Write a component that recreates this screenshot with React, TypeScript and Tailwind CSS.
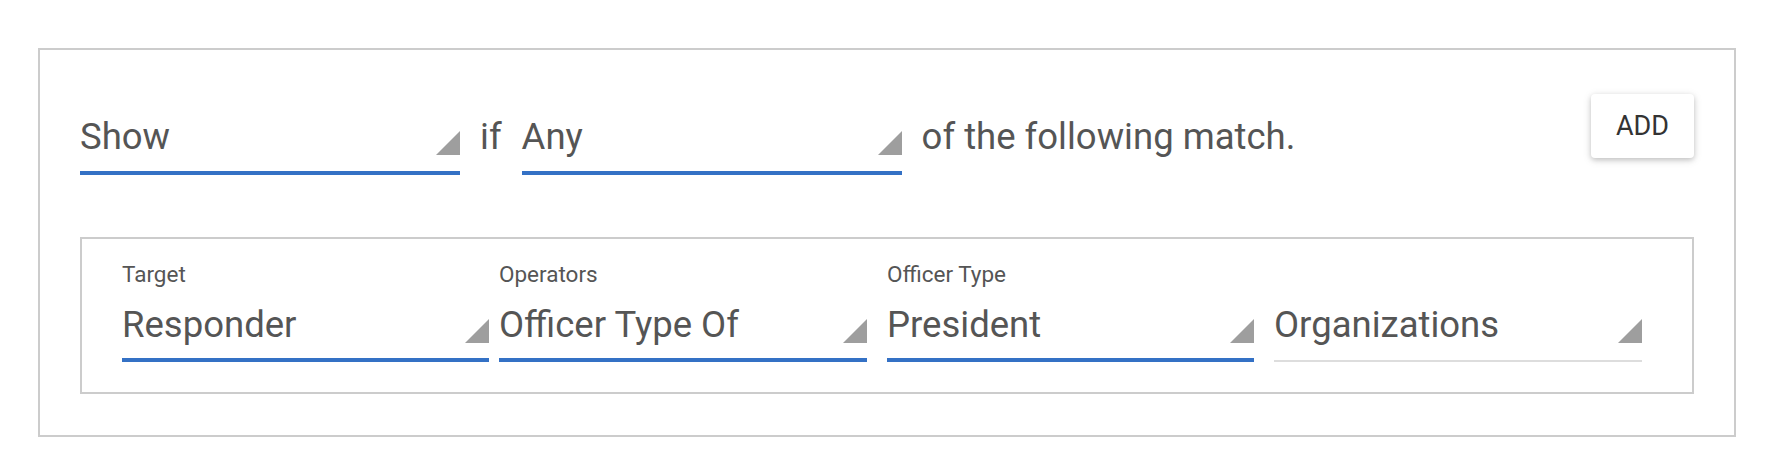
const Triangle = ({ className = "" }: { className?: string }) => (
  <svg width="24" height="24" viewBox="0 0 24 24" className={`shrink-0 ${className}`}>
    <polygon points="24,0 24,24 0,24" fill="#9e9e9e" />
  </svg>
);

interface SelectProps {
  value: string;
  width: string;
}

const TopSelect = ({ value, width }: SelectProps) => (
  <div className={`${width} flex items-end justify-between border-b-4 border-[#3471c5] pb-[13px]`}>
    <span className="text-[36.5px] leading-[42px]">{value}</span>
    <Triangle className="mb-[3px]" />
  </div>
);

interface FieldProps {
  label?: string;
  value: string;
  className?: string;
  active?: boolean;
}

const Field = ({ label, value, className = "", active = true }: FieldProps) => (
  <div className={`flex flex-col ${className}`}>
    {label && <div className="text-[22.5px] leading-[26px]">{label}</div>}
    <div
      className={`flex items-end justify-between ${
        label ? "mt-[17px]" : ""
      } ${active ? "border-b-4 border-[#3471c5] pb-[12px]" : "border-b-2 border-[#dddddd] pb-[14px]"}`}
    >
      <span className="text-[36.5px] leading-[42px]">{value}</span>
      <Triangle className="mb-[3px]" />
    </div>
  </div>
);

export default function App() {
  return (
    <div className="min-h-screen bg-white pt-[48px] pl-[38px] font-['Roboto',_'Liberation_Sans',_sans-serif] text-[#555555]">
      <div className="w-[1698px] border-2 border-[#cccccc] p-[40px] pb-[41px]">
        {/* Top row */}
        <div className="flex items-start justify-between">
          <div className="mt-[26px] flex items-end">
            <TopSelect value="Show" width="w-[380px]" />
            <span className="mx-[20px] pb-[17px] text-[36.5px] leading-[42px]">if</span>
            <TopSelect value="Any" width="w-[380px]" />
            <span className="ml-[20px] pb-[17px] text-[36.5px] leading-[42px]">of the following match.</span>
          </div>
          <button className="mt-[4px] flex h-[64px] w-[103px] items-center justify-center rounded-[4px] bg-white text-[27px] text-[#333333] shadow-[0_2px_5px_0_rgba(0,0,0,0.16),0_2px_10px_0_rgba(0,0,0,0.12)]">
            ADD
          </button>
        </div>

        {/* Condition row */}
        <div className="mt-[62px] flex items-end border-2 border-[#cccccc] pt-[22px] pb-[30px] pl-[40px]">
          <Field label="Target" value="Responder" className="w-[367px]" />
          <Field label="Operators" value="Officer Type Of" className="ml-[10px] w-[368px]" />
          <Field label="Officer Type" value="President" className="ml-[20px] w-[367px]" />
          <Field value="Organizations" className="ml-[20px] w-[368px]" active={false} />
        </div>
      </div>
    </div>
  );
}
